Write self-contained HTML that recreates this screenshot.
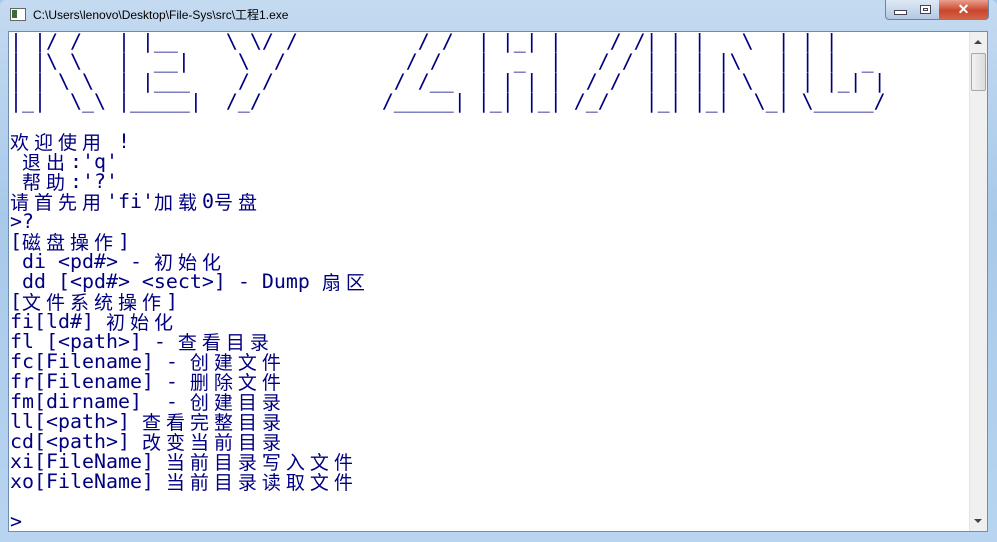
<!DOCTYPE html>
<html><head><meta charset="utf-8"><style>
html,body{margin:0;padding:0;width:997px;height:542px;overflow:hidden;background:#a9c8e8;}
.win{position:absolute;left:0;top:0;width:997px;height:542px;background:linear-gradient(180deg,#c4daf0 0%,#a9c9ea 40%,#b8d4f0 100%);border-radius:6px 6px 0 0;}
.title{position:absolute;left:33px;top:6px;font:12px "Liberation Sans",sans-serif;color:#000;}
.icon{position:absolute;left:10px;top:8px;width:14px;height:11px;background:#fff;border:1px solid #666;}
.icon:before{content:"";position:absolute;left:1px;top:1px;width:5px;height:8px;background:#3a6b3a;}
.btn{position:absolute;top:0;height:19px;border:1px solid #6d83a3;border-top:none;}
.min{left:885px;width:27px;border-radius:0 0 0 4px;background:linear-gradient(#dfe9f5,#b3c8e2);}
.max{left:912px;width:27px;background:linear-gradient(#dfe9f5,#b3c8e2);border-left:none;}
.cls{left:939px;width:49px;border-radius:0 0 4px 0;background:linear-gradient(#e9a08e,#c9462c 55%,#d4644a);border-left:none;}
.client{position:absolute;left:8px;top:31px;width:980px;height:501px;background:#fff;border:1px solid #6e8db0;box-sizing:border-box;overflow:hidden;}
.t{position:absolute;left:1px;top:0;font:19.93px/20px "DejaVu Sans Mono","Liberation Mono",monospace;color:#000080;}
.t div{height:20px;white-space:pre;}
.c{font-family:"Noto Sans CJK SC",sans-serif;font-size:19px;line-height:20px;letter-spacing:5px;display:inline-block;height:20px;vertical-align:top;}
.sb{position:absolute;right:0;top:0;width:17px;height:100%;background:#f0f0f0;border-left:1px solid #e4e4e4;}
.thumb{position:absolute;left:1px;top:21px;width:13px;height:36px;border:1px solid #a8a8a8;border-radius:2px;background:linear-gradient(90deg,#f2f2f2,#dcdcdc);}
</style></head><body>
<div class="win">
<div class="icon"></div>
<div class="title">C:\Users\lenovo\Desktop\File-Sys\src\工程1.exe</div>
<div class="btn min"><div style="position:absolute;left:8px;top:10px;width:11px;height:3px;background:#fff;border:1px solid #445"></div></div>
<div class="btn max"><div style="position:absolute;left:8px;top:5px;width:9px;height:7px;border:1px solid #445;background:#fff;box-shadow:inset 0 0 0 2px #fff,inset 0 0 0 3px #445"></div></div>
<div class="btn cls"><div style="position:absolute;left:0;width:49px;top:1px;text-align:center;color:#fff;font:bold 14px 'Liberation Sans',sans-serif;">✕</div></div>
<div class="client">
<div class="t">
<div>| |/ /   | |__    \ \/ /          / /  | |_| |    / /| | |   \  | | |</div>
<div>| |\ \   |  __|    \  /          / /   |  _  |   / / | | | |\   | | |  _</div>
<div>| | \ \  | |___    / /          / /__  | | | |  / /  | | | | \  | | |_| |</div>
<div>|_|  \_\ |_____|  /_/          /_____| |_| |_| /_/   |_| |_|  \_| \_____/</div>
<div> </div>
<div><span class="c">欢迎使用</span> !</div>
<div> <span class="c">退出</span>:'q'</div>
<div> <span class="c">帮助</span>:'?'</div>
<div><span class="c">请首先用</span>'fi'<span class="c">加载</span>0<span class="c">号盘</span></div>
<div>&gt;?</div>
<div>[<span class="c">磁盘操作</span>]</div>
<div> di &lt;pd#&gt; - <span class="c">初始化</span></div>
<div> dd [&lt;pd#&gt; &lt;sect&gt;] - Dump <span class="c">扇区</span></div>
<div>[<span class="c">文件系统操作</span>]</div>
<div>fi[ld#] <span class="c">初始化</span></div>
<div>fl [&lt;path&gt;] - <span class="c">查看目录</span></div>
<div>fc[Filename] - <span class="c">创建文件</span></div>
<div>fr[Filename] - <span class="c">删除文件</span></div>
<div>fm[dirname]  - <span class="c">创建目录</span></div>
<div>ll[&lt;path&gt;] <span class="c">查看完整目录</span></div>
<div>cd[&lt;path&gt;] <span class="c">改变当前目录</span></div>
<div>xi[FileName] <span class="c">当前目录写入文件</span></div>
<div>xo[FileName] <span class="c">当前目录读取文件</span></div>
<div> </div>
<div>&gt;</div>
</div>
<div class="sb"><div style="position:absolute;left:4px;top:8px;width:0;height:0;border-left:4px solid transparent;border-right:4px solid transparent;border-bottom:4px solid #444"></div><div class="thumb"></div><div style="position:absolute;left:4px;bottom:8px;width:0;height:0;border-left:4px solid transparent;border-right:4px solid transparent;border-top:4px solid #444"></div></div>
</div>
</div>
</body></html>
